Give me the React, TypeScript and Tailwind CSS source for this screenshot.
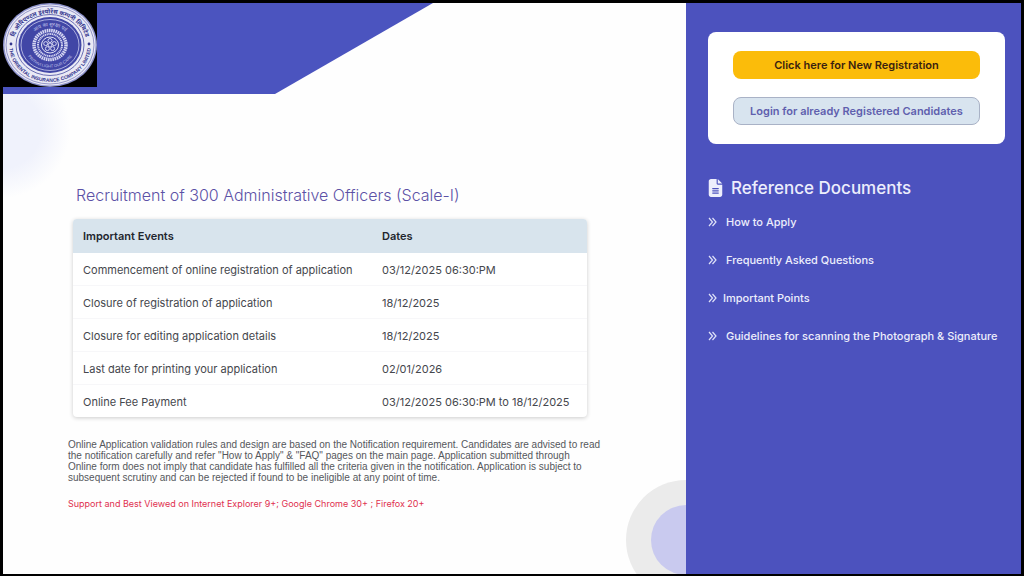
import { FaFileLines } from 'react-icons/fa6'

interface ImportantEvent {
  name: string
  date: string
}

const EVENTS: ImportantEvent[] = [
  { name: 'Commencement of online registration of application', date: '03/12/2025 06:30:PM' },
  { name: 'Closure of registration of application', date: '18/12/2025' },
  { name: 'Closure for editing application details', date: '18/12/2025' },
  { name: 'Last date for printing your application', date: '02/01/2026' },
  { name: 'Online Fee Payment', date: '03/12/2025 06:30:PM to 18/12/2025' },
]

const DOCUMENTS = [
  { label: 'How to Apply', gap: 'gap-[9px]' },
  { label: 'Frequently Asked Questions', gap: 'gap-[9px]' },
  { label: 'Important Points', gap: 'gap-[6px]' },
  { label: 'Guidelines for scanning the Photograph & Signature', gap: 'gap-[9px]' },
]

function Logo() {
  return (
    <svg viewBox="0 0 94 84" className="h-[84px] w-[94px] bg-black" role="img" aria-label="The Oriental Insurance Company Limited">
      <defs>
        <path id="ring-top" d="M 10 43 A 37 32.5 0 0 1 84 43" />
        <path id="ring-bottom" d="M 6 42 A 41 37 0 0 0 88 42" />
        <path id="inner-top" d="M 26 42 A 21 19 0 0 1 68 42" />
        <path id="inner-bottom" d="M 21.5 42 A 25.5 22.5 0 0 0 72.5 42" />
      </defs>
      <ellipse cx="47" cy="42" rx="47" ry="42" fill="#8f94cd" />
      <ellipse cx="47" cy="42" rx="45.5" ry="40.5" fill="#e9e9f5" />
      <ellipse cx="47" cy="42" rx="44" ry="39" fill="none" stroke="#7d80bd" strokeWidth="0.8" />
      <ellipse cx="47" cy="42" rx="34" ry="30.5" fill="none" stroke="#6a6db3" strokeWidth="1" />
      <ellipse cx="47" cy="42" rx="31.5" ry="28" fill="#4146a6" />
      <ellipse cx="47" cy="42" rx="29" ry="25.5" fill="none" stroke="#c9cbee" strokeWidth="0.8" />
      <g fill="#34378f" fontFamily="'Liberation Sans', 'Noto Sans', sans-serif" fontWeight="700">
        <text fontSize="6">
          <textPath href="#ring-top" startOffset="50%" textAnchor="middle">दि ओरिएण्टल इंश्योरेंस कम्पनी लिमिटेड</textPath>
        </text>
        <text fontSize="5">
          <textPath href="#ring-bottom" startOffset="50%" textAnchor="middle">THE ORIENTAL INSURANCE COMPANY LIMITED</textPath>
        </text>
      </g>
      <g fill="#c9cbee" fontFamily="'Liberation Sans', 'Noto Sans', sans-serif">
        <text fontSize="5">
          <textPath href="#inner-top" startOffset="50%" textAnchor="middle">आप का सुरक्षा पर्व</textPath>
        </text>
        <text fontSize="4">
          <textPath href="#inner-bottom" startOffset="50%" textAnchor="middle">PRITHVI LIGHT OUR CARE</textPath>
        </text>
      </g>
      <circle cx="8" cy="41" r="1.4" fill="#34378f" />
      <circle cx="86" cy="41" r="1.4" fill="#34378f" />
      <ellipse cx="47" cy="42" rx="16" ry="14.5" fill="none" stroke="#d6d7f2" strokeWidth="3.5" strokeDasharray="1.6 0.6" />
      <ellipse cx="47" cy="42" rx="12" ry="11" fill="none" stroke="#d6d7f2" strokeWidth="2" strokeDasharray="1.2 0.6" />
      <ellipse cx="47" cy="42" rx="8.5" ry="8" fill="#4146a6" stroke="#e4e5f6" strokeWidth="1" />
      <g fill="none" stroke="#d6d7f2" strokeWidth="1">
        <circle cx="47" cy="42" r="2" />
        <circle cx="47" cy="37.5" r="2" />
        <circle cx="51.3" cy="40.6" r="2" />
        <circle cx="49.6" cy="45.6" r="2" />
        <circle cx="44.4" cy="45.6" r="2" />
        <circle cx="42.7" cy="40.6" r="2" />
      </g>
    </svg>
  )
}

function DoubleChevron() {
  return (
    <svg viewBox="0 0 9 10" className="h-[10px] w-[9px] shrink-0" fill="none" stroke="#dfe2f8" strokeWidth="1.2" aria-hidden="true">
      <path d="M1 1 L4.5 5 L1 9 M4.5 1 L8 5 L4.5 9" />
    </svg>
  )
}

function EventsTable() {
  return (
    <table className="w-full table-fixed overflow-hidden rounded bg-white text-left text-[11px] leading-4 text-[#45474d] shadow-[0_1px_4px_rgba(0,0,0,0.2)]">
      <thead>
        <tr className="bg-[#d8e4ed] text-[#22262e]">
          <th className="w-[300px] px-[10px] py-[9px] font-semibold">Important Events</th>
          <th className="px-[9px] py-[9px] font-semibold">Dates</th>
        </tr>
      </thead>
      <tbody>
        {EVENTS.map((event) => (
          <tr key={event.name} className="border-b border-[#f7f7f9] last:border-0">
            <td className="px-[10px] pt-[9px] pb-[7px]">{event.name}</td>
            <td className="px-[9px] pt-[9px] pb-[7px]">{event.date}</td>
          </tr>
        ))}
      </tbody>
    </table>
  )
}

export default function App() {
  return (
    <div className="flex min-h-screen border-3 border-b-2 border-black bg-white font-['Inter',sans-serif]">
      <main className="relative flex-1 overflow-hidden bg-[#fefefe]">
        <div className="absolute top-[56px] -left-[72px] size-[140px] rounded-full bg-radial from-[#f0f2fc] from-40% to-transparent to-70%" />
        <div className="absolute -right-[60px] -bottom-[26px] flex size-[120px] items-center justify-center rounded-full bg-[#ebebeb]">
          <div className="size-[70px] rounded-full bg-[#c9caef]" />
        </div>

        <header className="relative h-[91px] w-[430px] bg-[#4b54bf] [clip-path:polygon(0_0,100%_0,272px_100%,0_100%)]">
          <Logo />
        </header>

        <div className="relative mt-[89px] pr-[80px] pl-[65px]">
          <h1 className="px-2 text-base leading-6 font-[350] text-[#5c51a6]">
            Recruitment of 300 Administrative Officers (Scale-I)
          </h1>
          <div className="mt-3 mr-[19px] ml-[5px]">
            <EventsTable />
          </div>
          <p className="mt-[22px] font-['Liberation_Sans',sans-serif] text-[10px] leading-[11px] text-[#55575c]">
            Online Application validation rules and design are based on the Notification requirement. Candidates are advised to read
            <br />
            the notification carefully and refer "How to Apply" &amp; "FAQ" pages on the main page. Application submitted through
            <br />
            Online form does not imply that candidate has fulfilled all the criteria given in the notification. Application is subject to
            <br />
            subsequent scrutiny and can be rejected if found to be ineligible at any point of time.
          </p>
          <p className="mt-[15px] text-[9px] leading-[11px] text-[#e0304f]">
            Support and Best Viewed on Internet Explorer 9+; Google Chrome 30+ ; Firefox 20+
          </p>
        </div>
      </main>

      <aside className="w-[335px] bg-[#4c52be] pt-[29px] pr-4 pl-[22px]">
        <div className="flex flex-col gap-[18px] rounded-lg bg-white px-[25px] py-[19px] text-[11px] leading-4 font-semibold">
          <button type="button" className="h-7 rounded-lg bg-[#fbbc0a] text-[#3a1f10]">
            Click here for New Registration
          </button>
          <button type="button" className="h-7 rounded-lg border border-[#a9b2c6] bg-[#d8e4ef] text-[#605fae]">
            Login for already Registered Candidates
          </button>
        </div>

        <h2 className="mt-8 flex items-center gap-2 text-[17px] leading-6 font-[450] text-[#eceefc]">
          <FaFileLines className="h-[18px] w-[15px]" />
          Reference Documents
        </h2>
        <ul className="mt-[14px] flex flex-col gap-[22px] text-[11px] leading-4 font-[450] text-[#eceefc]">
          {DOCUMENTS.map((doc) => (
            <li key={doc.label}>
              <a href="#" className={`flex items-center ${doc.gap}`}>
                <DoubleChevron />
                {doc.label}
              </a>
            </li>
          ))}
        </ul>
      </aside>
    </div>
  )
}
